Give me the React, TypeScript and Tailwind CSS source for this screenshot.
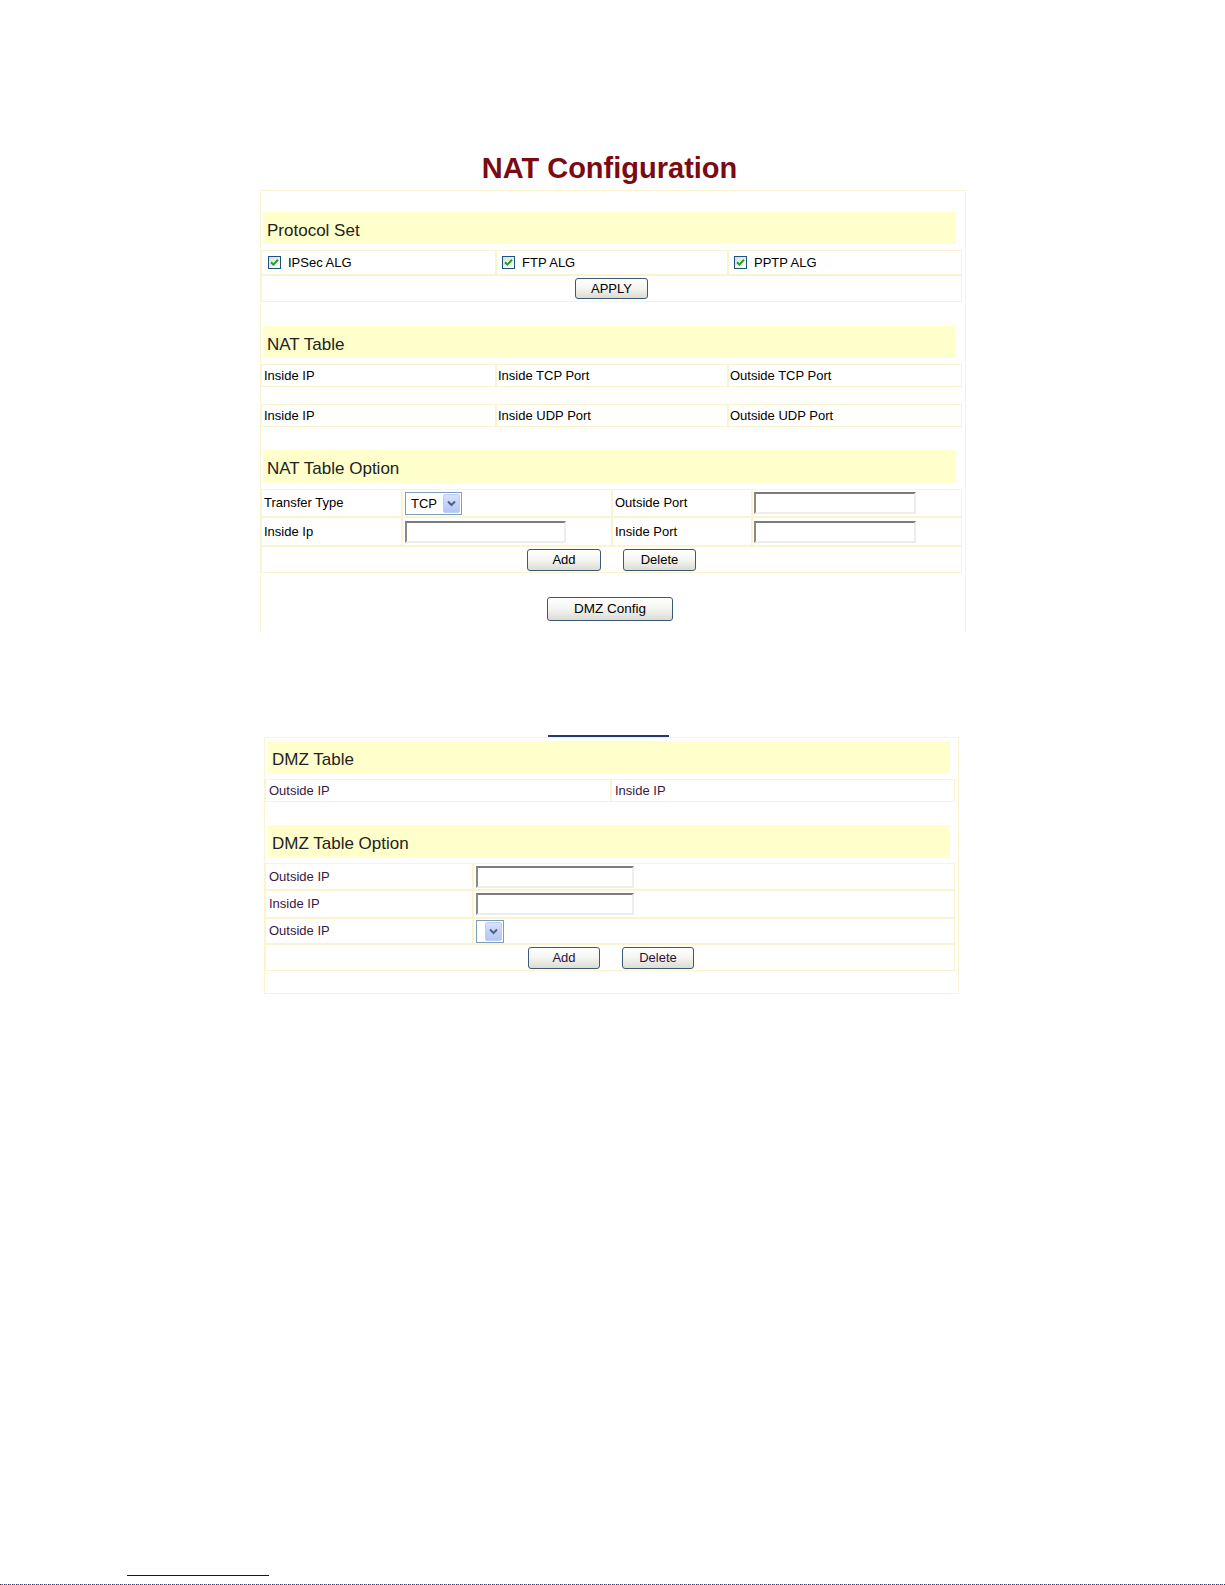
function Check() {
  return (
    <span className="flex h-[13px] w-[13px] items-center justify-center border border-[#1c5180] bg-gradient-to-br from-[#dcdcd6] to-white">
      <svg width="9" height="9" viewBox="0 0 9 9">
        <path d="M1 4.2 L3.4 6.6 L8 1.8" stroke="#21a121" strokeWidth="2" fill="none" />
      </svg>
    </span>
  );
}

function Btn({ label, w, h, purple, big }: { label: string; w: string; h: string; purple?: boolean; big?: boolean }) {
  return (
    <button
      className={`${w} ${h} flex items-center justify-center rounded-[3px] border border-[#3d5876] bg-gradient-to-b from-white via-[#f4f4f0] to-[#dcdcd4] leading-none ${
        big ? "text-[13.5px]" : "text-[13px]"
      } ${purple ? "text-[#2e0f3a]" : "text-black"}`}
    >
      {label}
    </button>
  );
}

function TextBox({ w }: { w: string }) {
  return (
    <div
      className={`${w} h-[22px] border-2 border-t-[#7c7c7c] border-l-[#8a8a8a] border-b-[#ededed] border-r-[#ededed] bg-white`}
    />
  );
}

function Dropdown({ text, w, h }: { text?: string; w: string; h: string }) {
  return (
    <div className={`${w} ${h} flex items-stretch border border-[#7f9db9] bg-white p-[1px]`}>
      <span className="flex-1 pl-[4px] text-[13px] leading-[19px] text-black">{text}</span>
      <span className="flex w-[17px] items-center justify-center rounded-[2px] border border-[#bccdf7] bg-gradient-to-b from-[#d6e1fd] to-[#b3c6f5]">
        <svg width="9" height="7" viewBox="0 0 9 7">
          <path d="M1 1.5 L4.5 5 L8 1.5" stroke="#4d6185" strokeWidth="2" fill="none" />
        </svg>
      </span>
    </div>
  );
}

function Header({ title, cls }: { title: string; cls: string }) {
  return (
    <div className={`${cls} flex h-[32px] items-center bg-[#ffffcc] pl-[4px] pt-[5px] text-[17px] text-[#222]`}>
      {title}
    </div>
  );
}

const cell = "border border-[#faf5d0] flex items-center";

export default function App() {
  return (
    <div className="flex h-[1585px] w-[1225px] flex-col overflow-hidden bg-white font-['Liberation_Sans',Arial,sans-serif] text-[13px] text-black">
      <div className="h-[152px] shrink-0" />
      {/* title */}
      <div className="h-[32px] shrink-0 pr-[6px] text-center text-[29px] font-bold leading-[32px] text-[#7b0a12]">
        NAT Configuration
      </div>

      {/* NAT panel */}
      <div className="mt-[6px] ml-[260px] h-[442px] w-[706px] shrink-0 border-x border-t border-[#faf5d0]">
        <div className="h-[21px]" />
        <Header title="Protocol Set" cls="ml-[2px] w-[693px]" />
        <div className="mt-[6px] flex h-[25px] w-[701px]">
          <div className={`${cell} w-[235px] gap-[7px] pl-[6px]`}>
            <Check />
            <span>IPSec ALG</span>
          </div>
          <div className={`${cell} w-[232px] gap-[7px] pl-[5px]`}>
            <Check />
            <span>FTP ALG</span>
          </div>
          <div className={`${cell} flex-1 gap-[7px] pl-[5px]`}>
            <Check />
            <span>PPTP ALG</span>
          </div>
        </div>
        <div className={`${cell} h-[27px] w-[701px] justify-center`}>
          <Btn label="APPLY" w="w-[73px]" h="h-[21px]" />
        </div>

        <div className="h-[24px]" />
        <Header title="NAT Table" cls="ml-[2px] w-[693px]" />
        <div className="mt-[6px] flex h-[23px] w-[701px]">
          <div className={`${cell} w-[235px] pl-[2px]`}>Inside IP</div>
          <div className={`${cell} w-[232px] pl-[1px]`}>Inside TCP Port</div>
          <div className={`${cell} flex-1 pl-[1px]`}>Outside TCP Port</div>
        </div>
        <div className="h-[17px]" />
        <div className="flex h-[23px] w-[701px]">
          <div className={`${cell} w-[235px] pl-[2px]`}>Inside IP</div>
          <div className={`${cell} w-[232px] pl-[1px]`}>Inside UDP Port</div>
          <div className={`${cell} flex-1 pl-[1px]`}>Outside UDP Port</div>
        </div>

        <div className="h-[23px]" />
        <Header title="NAT Table Option" cls="ml-[2px] w-[693px] h-[33px]" />
        <div className="mt-[6px] flex h-[28px] w-[701px]">
          <div className={`${cell} w-[141px] pl-[2px]`}>Transfer Type</div>
          <div className={`${cell} w-[210px] pl-[2px]`}>
            <Dropdown text="TCP" w="w-[57px]" h="h-[23px]" />
          </div>
          <div className={`${cell} w-[140px] pl-[2px]`}>Outside Port</div>
          <div className={`${cell} flex-1 pl-[1px]`}>
            <TextBox w="w-[162px]" />
          </div>
        </div>
        <div className="flex h-[29px] w-[701px]">
          <div className={`${cell} w-[141px] pl-[2px]`}>Inside Ip</div>
          <div className={`${cell} w-[210px] pl-[2px]`}>
            <TextBox w="w-[161px]" />
          </div>
          <div className={`${cell} w-[140px] pl-[2px]`}>Inside Port</div>
          <div className={`${cell} flex-1 pl-[1px]`}>
            <TextBox w="w-[162px]" />
          </div>
        </div>
        <div className={`${cell} h-[27px] w-[701px] justify-center gap-[22px]`}>
          <Btn label="Add" w="w-[74px]" h="h-[22px]" />
          <Btn label="Delete" w="w-[73px]" h="h-[22px]" />
        </div>

        <div className="mt-[24px] flex justify-center pr-[6px]">
          <Btn label="DMZ Config" w="w-[126px]" h="h-[24px]" big />
        </div>
      </div>

      {/* DMZ frame */}
      <div className="mt-[103px] ml-[548px] h-[2px] w-[121px] shrink-0 bg-[#1f3c6c]" />
      <div className="ml-[264px] w-[695px] shrink-0 border border-[#faf5d0] pb-[22px] text-[#3a1646]">
        <Header title="DMZ Table" cls="mt-[3px] ml-[3px] w-[682px] text-[#2a2a1a]" />
        <div className="mt-[6px] flex h-[23px] w-[690px]">
          <div className={`${cell} w-[346px] pl-[3px]`}>Outside IP</div>
          <div className={`${cell} flex-1 pl-[3px]`}>Inside IP</div>
        </div>

        <div className="h-[23px]" />
        <Header title="DMZ Table Option" cls="ml-[3px] w-[682px] text-[#2a2a1a]" />
        <div className="mt-[6px] flex h-[27px] w-[690px]">
          <div className={`${cell} w-[208px] pl-[3px]`}>Outside IP</div>
          <div className={`${cell} flex-1 pl-[2px]`}>
            <TextBox w="w-[158px]" />
          </div>
        </div>
        <div className="flex h-[28px] w-[690px]">
          <div className={`${cell} w-[208px] pl-[3px]`}>Inside IP</div>
          <div className={`${cell} flex-1 pl-[2px]`}>
            <TextBox w="w-[158px]" />
          </div>
        </div>
        <div className="flex h-[26px] w-[690px]">
          <div className={`${cell} w-[208px] pl-[3px]`}>Outside IP</div>
          <div className={`${cell} flex-1 pl-[2px]`}>
            <Dropdown w="w-[28px]" h="h-[23px]" />
          </div>
        </div>
        <div className={`${cell} h-[27px] w-[690px] justify-center gap-[22px] pl-[2px]`}>
          <Btn label="Add" w="w-[72px]" h="h-[22px]" purple />
          <Btn label="Delete" w="w-[72px]" h="h-[22px]" purple />
        </div>
      </div>

      {/* footer rule, pinned to page bottom */}
      <div className="mt-auto ml-[127px] h-[1px] w-[142px] shrink-0 bg-[#0000cc]" />
      <div className="mt-[8px] h-[1px] w-full shrink-0 bg-[repeating-linear-gradient(90deg,#333_0_1px,#c9b400_1px_2px,#3a4fd0_2px_3px,#fff_3px_4px)]" />
    </div>
  );
}
